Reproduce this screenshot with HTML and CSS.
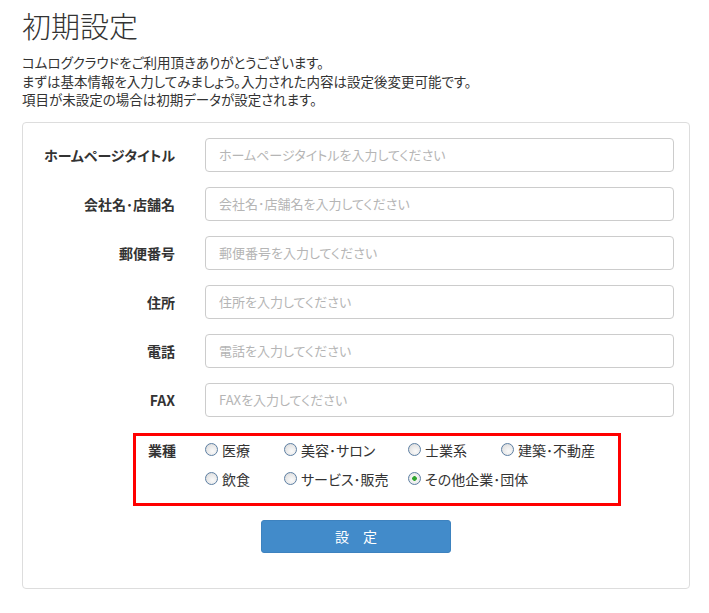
FILE: index.html
```html
<!DOCTYPE html>
<html lang="ja">
<head>
    <meta charset="UTF-8">
    <title>初期設定</title>
    <link rel="stylesheet" href="styles.css">
</head>
<body>
    <div class="container">
        <h1>初期設定</h1>
        <p class="lead">コムログクラウドをご利用頂きありがとうございます。<br>
        まずは基本情報を入力してみましょう。入力された内容は設定後変更可能です。<br>
        項目が未設定の場合は初期データが設定されます。</p>

        <form class="panel">
            <div class="form-row">
                <label for="title">ホームページタイトル</label>
                <input type="text" id="title" placeholder="ホームページタイトルを入力してください">
            </div>
            <div class="form-row">
                <label for="company">会社名･店舗名</label>
                <input type="text" id="company" placeholder="会社名･店舗名を入力してください">
            </div>
            <div class="form-row">
                <label for="zip">郵便番号</label>
                <input type="text" id="zip" placeholder="郵便番号を入力してください">
            </div>
            <div class="form-row">
                <label for="address">住所</label>
                <input type="text" id="address" placeholder="住所を入力してください">
            </div>
            <div class="form-row">
                <label for="tel">電話</label>
                <input type="text" id="tel" placeholder="電話を入力してください">
            </div>
            <div class="form-row">
                <label for="fax">FAX</label>
                <input type="text" id="fax" placeholder="FAXを入力してください">
            </div>

            <div class="industry">
                <span class="industry-label">業種</span>
                <div class="radios">
                    <label class="radio"><input type="radio" name="gyoshu">医療</label>
                    <label class="radio"><input type="radio" name="gyoshu">美容･サロン</label>
                    <label class="radio"><input type="radio" name="gyoshu">士業系</label>
                    <label class="radio"><input type="radio" name="gyoshu">建築･不動産</label>
                    <label class="radio"><input type="radio" name="gyoshu">飲食</label>
                    <label class="radio"><input type="radio" name="gyoshu">サービス･販売</label>
                    <label class="radio"><input type="radio" name="gyoshu" checked>その他企業･団体</label>
                </div>
            </div>

            <div class="actions">
                <button type="button">設　定</button>
            </div>
        </form>
    </div>
</body>
</html>
```

FILE: styles.css
```css
body {
    margin: 0;
    font-family: "Noto Sans CJK JP", "Noto Sans", sans-serif;
    font-size: 13px;
    color: #333;
    background-color: #fff;
}
.container {
    padding: 0 19px 0 22px;
}
h1 {
    margin: 0;
    padding-top: 5px;
    font-size: 29px;
    font-weight: 300;
    line-height: 40px;
    color: #333;
}
.lead {
    margin: 8px 0 13px;
    font-size: 13.5px;
    line-height: 18.5px;
    font-feature-settings: "palt";
}
.panel {
    border: 1px solid #ddd;
    border-radius: 4px;
    padding: 15px 15px 35px 0;
}
.form-row {
    display: flex;
    align-items: center;
    margin-bottom: 15px;
}
.form-row label {
    width: 152px;
    flex: none;
    text-align: right;
    font-weight: bold;
    font-size: 14px;
    font-feature-settings: "palt";
    margin-right: 30px;
}
.form-row input {
    flex: 1;
    height: 34px;
    box-sizing: border-box;
    border: 1px solid #ccc;
    border-radius: 4px;
    padding: 6px 13px;
    font-family: inherit;
    font-size: 13px;
    font-feature-settings: "palt";
    color: #555;
}
.form-row input::placeholder {
    color: #b5b5b5;
}
.industry {
    display: flex;
    width: 482px;
    margin: 16px 0 0 110px;
    border: 3px solid #f00;
    padding: 4px 0 14px;
}
.industry-label {
    width: 40px;
    flex: none;
    text-align: right;
    font-weight: bold;
    font-size: 14px;
    line-height: 20px;
    margin-right: 29px;
}
.radios {
    display: grid;
    grid-template-columns: 79px 124px 93px auto;
    row-gap: 9px;
}
.radio {
    display: flex;
    align-items: center;
    line-height: 20px;
    font-size: 14px;
    font-feature-settings: "palt";
    white-space: nowrap;
}
.radio input {
    appearance: none;
    width: 13px;
    height: 13px;
    margin: 0 4px 0 0;
    border: 1px solid #5d7fa3;
    border-radius: 50%;
    background: radial-gradient(circle at 60% 65%, #fafafa 0, #e6e6e6 60%, #cfcfcf 100%);
    box-sizing: border-box;
    flex: none;
}
.radio input:checked {
    background: radial-gradient(circle, #2fa52f 0, #2fa52f 2px, #f4f4f4 2.6px, #dedede 100%);
}
.actions {
    text-align: center;
    padding-left: 15px;
    margin-top: 14px;
}
button {
    width: 190px;
    height: 33px;
    background-color: #428bca;
    border: 1px solid #3d82bf;
    border-radius: 3px;
    color: #fff;
    font-family: inherit;
    font-size: 14px;
    cursor: pointer;
}
```
